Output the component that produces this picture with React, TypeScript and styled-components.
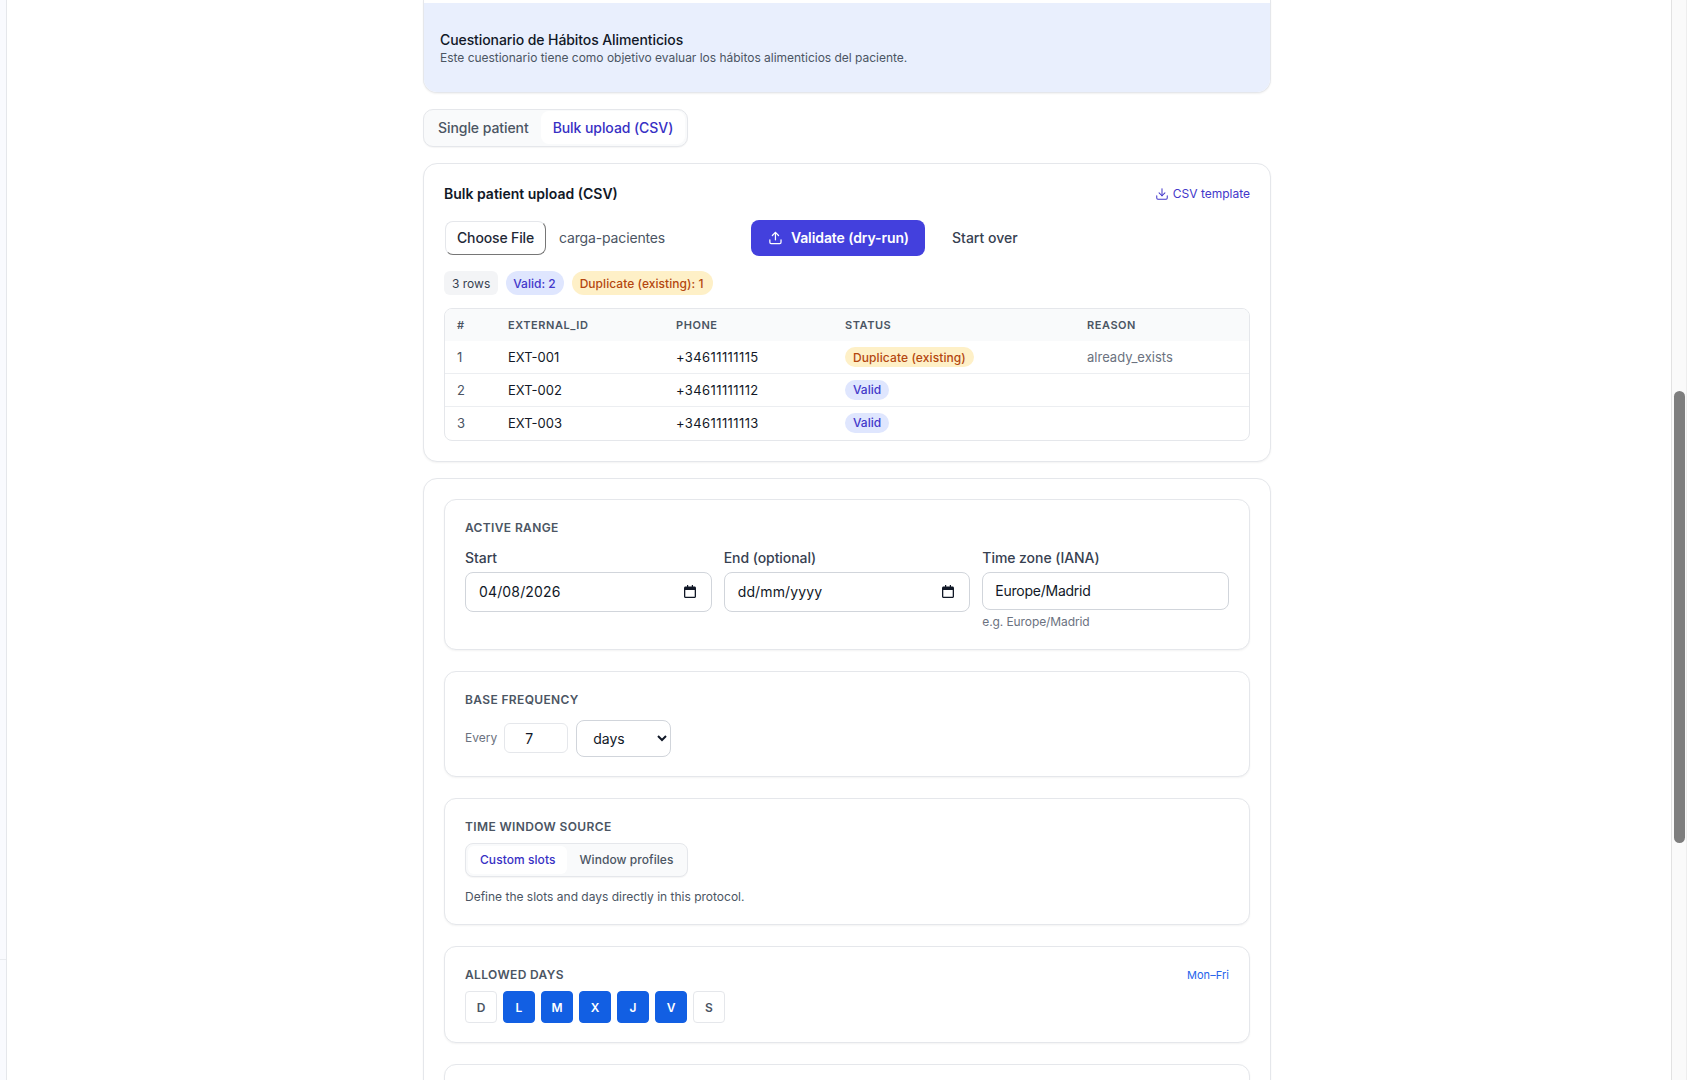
import React from "react";
import styled, { createGlobalStyle } from "styled-components";
import { Download, Upload } from "lucide-react";

const Global = createGlobalStyle`
  html, body { margin: 0; padding: 0; height: 100%; overflow: hidden; background: #fff; }
  * { box-sizing: border-box; }
  body { font-family: Inter, "Liberation Sans", sans-serif; color: #111827; -webkit-font-smoothing: antialiased; }
`;

const Page = styled.div`display: flex; width: 1687px; height: 1080px; overflow: hidden; background: #fff;`;
const LeftRail = styled.aside`
  width: 7px; flex: none; background: #f9fafe; border-right: 1px solid #e5e7eb; padding-top: 959px;
`;
const RailLine = styled.div`height: 1px; background: #e9ebef;`;
const Main = styled.main`
  flex: 1; min-width: 0; padding-left: 416px; height: 1080px; overflow: hidden;
`;
const Column = styled.div`width: 848px; display: flex; flex-direction: column;`;
const Track = styled.div`
  width: 16px; flex: none; background: #fafafa; border-left: 1px solid #e2e2e2; border-right: 1px solid #eeeeee; padding: 391px 1px 0 2px;
`;
const Thumb = styled.div`height: 452px; width: 11px; border-radius: 6px; background: #7e7e7e;`;

const InfoCard = styled.section`
  height: 93px; padding-top: 3px; background: #fff; border: 1px solid #e5e7eb; border-top: 0; border-radius: 0 0 14px 14px; overflow: hidden;
  box-shadow: 0 1px 2px rgba(0,0,0,.06);
`;
const InfoBody = styled.div`
  height: 100%; background: #e9effd; padding: 27px 16px 0 16px;
`;
const InfoTitle = styled.div`font-size: 14px; line-height: 20px; font-weight: 500; letter-spacing: -0.09px; color: #111827;`;
const InfoText = styled.div`font-size: 12px; line-height: 16px; letter-spacing: -0.02px; color: #4b5563;`;

const Seg = styled.div<{ $large?: boolean }>`
  display: inline-flex; align-self: flex-start; align-items: flex-start; background: #f9fafb; border: 1px solid #e5e7eb;
  border-radius: ${p => (p.$large ? 10 : 8)}px; padding: ${p => (p.$large ? "1px 2px 1px 1px" : "2px")};
  height: ${p => (p.$large ? 38 : 34)}px; box-shadow: 0 1px 1px rgba(0,0,0,.04);
`;
const SegItem = styled.div<{ $on?: boolean; $large?: boolean }>`
  display: flex; align-items: center; height: ${p => (p.$large ? 33 : 28)}px;
  padding: 0 12px;
  padding-left: ${p => (p.$large ? (p.$on ? 12 : 13) : 12)}px;
  padding-bottom: ${p => (p.$large ? 0 : 1)}px;
  font-size: ${p => (p.$large ? 14 : 12)}px; font-weight: 500;
  letter-spacing: ${p => (p.$large ? "-0.07px" : "0.06px")};
  border-radius: ${p => (p.$large ? 8 : 6)}px;
  color: ${p => (p.$on ? "#3730c4" : "#4b5563")};
  background: ${p => (p.$on ? "#fff" : "transparent")};
`;
const TabBar = styled(Seg)`margin-top: 16px;`;

const Card = styled.section<{ $gapTop: number }>`
  margin-top: ${p => p.$gapTop}px; background: #fff; border: 1px solid #e5e7eb; border-radius: 14px; box-shadow: 0 1px 2px rgba(0,0,0,.05);
`;
const BulkCard = styled(Card)`height: 299px; padding: 20px;`;
const SettingsCard = styled(Card)`padding: 20px; display: flex; flex-direction: column; gap: 21px;`;

const BulkHead = styled.div`display: flex; align-items: center; justify-content: space-between; height: 20px;`;
const BulkTitle = styled.h2`margin: 0; font-size: 14px; font-weight: 600; line-height: 20px; color: #111827;`;
const TemplateLink = styled.a`
  display: inline-flex; align-items: center; gap: 4px; font-size: 12px; font-weight: 400; color: #4338ca; margin-bottom: 1px;
`;
const FileRow = styled.div`display: flex; align-items: center; margin-top: 16px; height: 36px; padding-left: 1px;`;
const FileButton = styled.button`
  width: 101px; height: 34px; padding: 0 0 1px; background: #fff; font: 500 14px Inter, sans-serif; letter-spacing: -0.15px; color: #1f2937; border-radius: 8px;
  border: 1px solid; border-color: #e5e7eb #767676 #767676 #e5e7eb;
`;
const FileName = styled.span`margin: 0 0 1px 13px; width: 192px; font-size: 14px; letter-spacing: -0.15px; color: #4b5563;`;
const PrimaryButton = styled.button`
  display: inline-flex; align-items: center; gap: 8px; width: 174px; height: 36px; padding: 0 16px 1px 17px; border: 0; border-radius: 8px;
  background: #4340dd; color: #fff; font: 600 14px Inter, sans-serif; white-space: nowrap; letter-spacing: -0.1px;
`;
const GhostButton = styled.button`
  margin: 0 0 1px 27px; padding: 0; background: none; border: 0; font: 500 14px Inter, sans-serif; color: #374151;
`;
const BadgeRow = styled.div`display: flex; gap: 8px; margin-top: 15px;`;
const Badge = styled.span<{ $tone: "gray" | "blue" | "amber"; $small?: boolean }>`
  display: inline-flex; align-items: center; font-size: 12px; white-space: nowrap;
  height: ${p => (p.$small ? 20 : 24)}px; padding: 0 8px;
  ${p => (p.$tone === "blue" && !p.$small ? "padding-left: 7px;" : "")}
  ${p => (p.$tone === "amber" && !p.$small ? "padding-right: 10px; letter-spacing: .05px;" : "")}
  ${p => (p.$tone === "amber" && p.$small ? "letter-spacing: .1px;" : "")}
  border-radius: ${p => (p.$tone === "gray" ? 6 : 999)}px;
  font-weight: ${p => (p.$tone === "gray" ? 400 : 500)};
  background: ${p => ({ gray: "#f3f4f6", blue: "#dfe6fe", amber: "#fef0c7" }[p.$tone])};
  color: ${p => ({ gray: "#374151", blue: "#4338ca", amber: "#b4470f" }[p.$tone])};
`;

const TableWrap = styled.div`margin-top: 13px; padding-bottom: 1px; border: 1px solid #e5e7eb; border-radius: 8px; overflow: hidden;`;
const Table = styled.table`width: 100%; table-layout: fixed; border-collapse: collapse;`;
const Th = styled.th<{ $w?: number }>`
  ${p => (p.$w ? `width: ${p.$w}px;` : "")}
  height: 32px; padding: 0 12px; background: #f9fafb; text-align: left; font-size: 11px; font-weight: 600; letter-spacing: .05em; text-transform: uppercase; color: #4b5563;
`;
const Tr = styled.tr`& + & td { border-top: 1px solid #eceef1; }`;
const Td = styled.td<{ $muted?: boolean; $reason?: boolean; $phone?: boolean }>`
  height: 32.6px; padding: 0 12px; font-size: 13px;
  ${p => (p.$phone ? "letter-spacing: .4px;" : "")}
  color: ${p => (p.$reason ? "#6b7280" : p.$muted ? "#4b5563" : "#111827")};
`;

const Panel = styled.section`
  padding: 20px 20px 19px; border: 1px solid #e5e7eb; border-radius: 12px; background: #fff; box-shadow: 0 1px 2px rgba(0,0,0,.05);
`;
const EmptyPanel = styled(Panel)`height: 80px;`;
const PanelHead = styled.div`display: flex; justify-content: space-between; align-items: center;`;
const PanelLabel = styled.h3<{ $mb: number }>`
  margin: 0 0 ${p => p.$mb}px; font-size: 12px; line-height: 15px; font-weight: 600; letter-spacing: .03em; text-transform: uppercase; color: #4b5563;
`;
const FieldGrid = styled.div`display: grid; grid-template-columns: repeat(3, 1fr); gap: 12px;`;
const Field = styled.div`display: flex; flex-direction: column; min-width: 0;`;
const FieldLabel = styled.label`font-size: 14px; line-height: 20px; font-weight: 500; letter-spacing: -0.06px; color: #374151; margin-bottom: 4px;`;
const DateBox = styled.div`
  height: 40px; display: flex; align-items: center; justify-content: space-between; padding: 0 15px 2px 13px;
  border: 1px solid #d1d5db; border-radius: 8px; font-size: 14px; color: #111827; letter-spacing: .15px;
`;
const TextInput = styled.input`
  height: 38px; padding: 0 12px 2px; border: 1px solid #d1d5db; border-radius: 8px; font: 14px Inter, sans-serif; letter-spacing: -0.25px; color: #111827; width: 100%;
`;
const Hint = styled.div`margin-top: 4px; font-size: 12px; line-height: 16px; letter-spacing: -0.1px; color: #6b7280;`;

const FreqRow = styled.div`display: flex; align-items: center; gap: 8px;`;
const FreqLabel = styled.span`font-size: 12px; color: #6b7280; margin: 0 -1px 2px 0;`;
const NumberBox = styled.input`
  width: 64px; height: 30px; margin-bottom: 1px; padding: 0 20px; border: 1px solid #e5e7eb; border-radius: 6px; font: 14px Inter, sans-serif; color: #111827;
`;
const Select = styled.select`
  width: 95px; height: 37px; padding: 0 6px 0 12px; border: 1px solid #d1d5db; border-radius: 8px; background: #fff; font: 14px Inter, sans-serif; color: #111827;
`;
const HelpText = styled.p`margin: 12px 0 0; font-size: 12px; line-height: 16px; color: #4b5563;`;
const QuickLink = styled.a`font-size: 11px; font-weight: 400; letter-spacing: .05px; color: #2563eb; margin-bottom: 8px;`;
const Days = styled.div`display: flex; gap: 6px;`;
const Day = styled.button<{ $on?: boolean }>`
  width: 32px; height: 32px; padding: 0; border-radius: 4px; font: 600 12px Inter, sans-serif;
  border: 1px solid ${p => (p.$on ? "#125fe3" : "#e5e7eb")};
  background: ${p => (p.$on ? "#125fe3" : "#fff")};
  color: ${p => (p.$on ? "#fff" : "#4b5563")};
`;

const Calendar = () => (
  <svg width="12" height="13" viewBox="0 0 12 13" aria-hidden="true">
    <path d="M3 0h1.2v1.5h3.6V0H9v1.5h1.5c.8 0 1.500.7 1.500 1.500v8.500c0 .8-.7 1.500-1.500 1.500h-9C.7 13 0 12.300 0 11.500V3c0-.8.700-1.500 1.500-1.500H3V0zM1.300 5v6.500c0 .1.100.2.200.2h9c.1 0 .2-.1.200-.2V5H1.300z" fill="#111827" />
  </svg>
);

const rows = [
  { n: 1, id: "EXT-001", phone: "+34611111115", dup: true, reason: "already_exists" },
  { n: 2, id: "EXT-002", phone: "+34611111112", dup: false, reason: "" },
  { n: 3, id: "EXT-003", phone: "+34611111113", dup: false, reason: "" },
];

export default function App() {
  return (
    <Page>
      <Global />
      <LeftRail><RailLine /></LeftRail>
      <Main>
        <Column>
          <InfoCard>
            <InfoBody>
              <InfoTitle>Cuestionario de Hábitos Alimenticios</InfoTitle>
              <InfoText>Este cuestionario tiene como objetivo evaluar los hábitos alimenticios del paciente.</InfoText>
            </InfoBody>
          </InfoCard>

          <TabBar $large>
            <SegItem $large>Single patient</SegItem>
            <SegItem $large $on>Bulk upload (CSV)</SegItem>
          </TabBar>

          <BulkCard $gapTop={16}>
            <BulkHead>
              <BulkTitle>Bulk patient upload (CSV)</BulkTitle>
              <TemplateLink><Download size={14} strokeWidth={1.75} />CSV template</TemplateLink>
            </BulkHead>
            <FileRow>
              <FileButton>Choose File</FileButton>
              <FileName>carga-pacientes</FileName>
              <PrimaryButton><Upload size={16} strokeWidth={2} />Validate (dry-run)</PrimaryButton>
              <GhostButton>Start over</GhostButton>
            </FileRow>
            <BadgeRow>
              <Badge $tone="gray">3 rows</Badge>
              <Badge $tone="blue">Valid: 2</Badge>
              <Badge $tone="amber">Duplicate (existing): 1</Badge>
            </BadgeRow>
            <TableWrap>
              <Table>
                <thead>
                  <tr>
                    <Th $w={51}>#</Th>
                    <Th $w={168}>external_id</Th>
                    <Th $w={169}>phone</Th>
                    <Th $w={242}>status</Th>
                    <Th>reason</Th>
                  </tr>
                </thead>
                <tbody>
                  {rows.map(r => (
                    <Tr key={r.n}>
                      <Td $muted>{r.n}</Td>
                      <Td>{r.id}</Td>
                      <Td $phone>{r.phone}</Td>
                      <Td>
                        {r.dup
                          ? <Badge $tone="amber" $small>Duplicate (existing)</Badge>
                          : <Badge $tone="blue" $small>Valid</Badge>}
                      </Td>
                      <Td $reason>{r.reason}</Td>
                    </Tr>
                  ))}
                </tbody>
              </Table>
            </TableWrap>
          </BulkCard>

          <SettingsCard $gapTop={16}>
            <Panel>
              <PanelLabel $mb={13}>Active range</PanelLabel>
              <FieldGrid>
                <Field>
                  <FieldLabel>Start</FieldLabel>
                  <DateBox>04/08/2026<Calendar /></DateBox>
                </Field>
                <Field>
                  <FieldLabel>End (optional)</FieldLabel>
                  <DateBox>dd/mm/yyyy<Calendar /></DateBox>
                </Field>
                <Field>
                  <FieldLabel>Time zone (IANA)</FieldLabel>
                  <TextInput defaultValue="Europe/Madrid" />
                  <Hint>e.g. Europe/Madrid</Hint>
                </Field>
              </FieldGrid>
            </Panel>

            <Panel>
              <PanelLabel $mb={13}>Base frequency</PanelLabel>
              <FreqRow>
                <FreqLabel>Every</FreqLabel>
                <NumberBox defaultValue="7" />
                <Select defaultValue="days">
                  <option value="days">days</option>
                </Select>
              </FreqRow>
            </Panel>

            <Panel>
              <PanelLabel $mb={9}>Time window source</PanelLabel>
              <Seg>
                <SegItem $on>Custom slots</SegItem>
                <SegItem>Window profiles</SegItem>
              </Seg>
              <HelpText>Define the slots and days directly in this protocol.</HelpText>
            </Panel>

            <Panel>
              <PanelHead>
                <PanelLabel $mb={9}>Allowed days</PanelLabel>
                <QuickLink>Mon–Fri</QuickLink>
              </PanelHead>
              <Days>
                <Day>D</Day>
                <Day $on>L</Day>
                <Day $on>M</Day>
                <Day $on>X</Day>
                <Day $on>J</Day>
                <Day $on>V</Day>
                <Day>S</Day>
              </Days>
            </Panel>

            <EmptyPanel />
          </SettingsCard>
        </Column>
      </Main>
      <Track><Thumb /></Track>
    </Page>
  );
}
